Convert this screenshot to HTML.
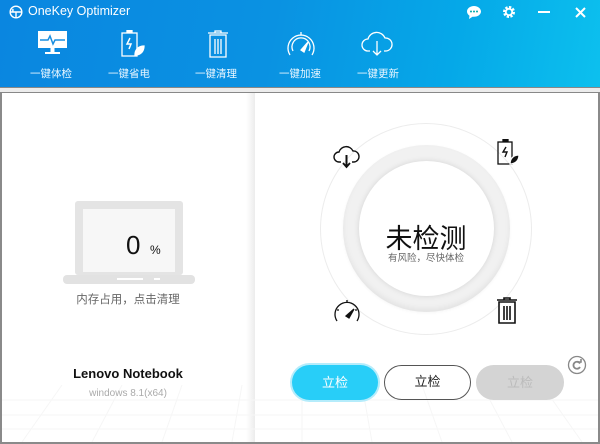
<!DOCTYPE html>
<html><head><meta charset="utf-8"><style>
*{margin:0;padding:0;box-sizing:border-box}
body{width:600px;height:444px;overflow:hidden;background:#fff;font-family:"Liberation Sans","Noto Sans CJK SC",sans-serif;position:relative}
.hdr{position:absolute;left:0;top:0;width:600px;height:88px;background:linear-gradient(100deg,#0a86e0 0%,#0a92e2 45%,#05a8e8 75%,#0cc0ee 100%)}
.t{position:absolute;color:#fff}
.lab{position:absolute;top:66px;color:#e8f6ff;font-size:10.5px;width:60px;text-align:center}
.strip{position:absolute;left:0;top:87px;width:600px;height:6px;background:#ececec;border-top:1px solid #888;border-bottom:1px solid #888}
.frame{position:absolute;left:0;top:93px;width:600px;height:351px;border-left:2px solid #8a8a8a;border-right:2px solid #8a8a8a;border-bottom:2px solid #8a8a8a}
.div{position:absolute;left:246px;top:93px;width:9px;height:349px;background:linear-gradient(90deg,#fff,#ececec)}
.btn{position:absolute;top:365px;height:35px;border-radius:18px;font-size:13px;text-align:center;line-height:35px}
</style></head><body>
<div class="hdr">
<svg style="position:absolute;left:9px;top:5px" width="14" height="14" viewBox="0 0 18 18" fill="none" stroke="#fff" stroke-width="1.8"><circle cx="9" cy="9" r="7.5"/><path d="M2 9h14M9 9v7M5 5v4"/></svg>
<div class="t" style="left:28px;top:4px;font-size:12.5px">OneKey Optimizer</div>
<svg style="position:absolute;left:466px;top:5px" width="16" height="15" viewBox="0 0 16 15"><path d="M8 1C4 1 1 3.5 1 6.5c0 1.8 1 3.2 2.5 4.2L3 14l3.5-2.3c.5.1 1 .1 1.5.1 4 0 7-2.5 7-5.3S12 1 8 1z" fill="#fff"/><circle cx="5" cy="6.5" r="1" fill="#0aa"/><circle cx="8" cy="6.5" r="1" fill="#0aa"/><circle cx="11" cy="6.5" r="1" fill="#0aa"/></svg>
<svg style="position:absolute;left:502px;top:5px" width="14" height="14" viewBox="0 0 14 14"><circle cx="7" cy="7" r="4.5" fill="none" stroke="#fff" stroke-width="3" stroke-dasharray="2.2 1.3"/><circle cx="7" cy="7" r="3.2" fill="none" stroke="#fff" stroke-width="1.8"/></svg>
<div style="position:absolute;left:538px;top:11px;width:12px;height:2px;background:#fff"></div>
<svg style="position:absolute;left:575px;top:7px" width="11" height="11" viewBox="0 0 11 11" stroke="#fff" stroke-width="2"><path d="M1 1l9 9M10 1l-9 9"/></svg>
<svg style="position:absolute;left:38px;top:31px" width="29" height="24" viewBox="0 0 29 24"><rect x="0" y="0" width="29" height="17" fill="#fff"/><path d="M2 9h8l2-4 3 8 2-4h10" fill="none" stroke="#1a8fe0" stroke-width="1.5"/><rect x="12.5" y="17" width="4" height="4" fill="#fff"/><rect x="7" y="21" width="15" height="2" fill="#fff"/></svg>
<svg style="position:absolute;left:119px;top:30px" width="28" height="28" viewBox="0 0 26 28" fill="none" stroke="#fff" stroke-width="1.3"><rect x="7" y="0.5" width="5" height="2" fill="#fff"/><rect x="2" y="3" width="15" height="23"/><path d="M10 8l-3 6h4l-2 5" stroke-width="1.5"/><path d="M15 25c0-6 4-9 9-9 0 6-4 9-9 9z" fill="#fff"/></svg>
<svg style="position:absolute;left:207px;top:30px" width="22" height="28" viewBox="0 0 22 28" fill="none" stroke="#fff" stroke-width="1.3"><path d="M1 3h20M8 3V1h6v2M3 5h16v22H3z"/><path d="M8 9v15M11 9v15M14 9v15"/></svg>
<svg style="position:absolute;left:285px;top:30px" width="32" height="28" viewBox="0 0 32 28" fill="none" stroke="#fff" stroke-width="1.3"><path d="M5 25A13 13 0 1 1 27 25"/><path d="M8 21A9 9 0 1 1 24 21"/><path d="M16 20l7-8-4 10z" fill="#fff"/><path d="M16 2v3"/></svg>
<svg style="position:absolute;left:361px;top:31px" width="32" height="26" viewBox="0 0 32 26" fill="none" stroke="#fff" stroke-width="1.3"><path d="M9 20H7a6 6 0 0 1 0-12 9 9 0 0 1 17-1 6.5 6.5 0 0 1 1 13h-2"/><path d="M16 10v14M12 20l4 4 4-4"/></svg>
<div class="lab" style="left:21px">一键体检</div>
<div class="lab" style="left:99px">一键省电</div>
<div class="lab" style="left:186px">一键清理</div>
<div class="lab" style="left:270px">一键加速</div>
<div class="lab" style="left:348px">一键更新</div>
</div>
<div class="strip"></div>
<div class="frame"></div>
<div class="div"></div>
<svg style="position:absolute;left:2px;top:385px" width="596" height="57"><g stroke="#f6f6f6" stroke-width="1" fill="none"><path d="M0 15L596 15M0 30L596 30M0 44L596 44"/><path d="M60 0L20 57M120 0L90 57M180 0L160 57M240 0L230 57M300 0L300 57M360 0L370 57M420 0L440 57M480 0L510 57M540 0L580 57"/></g></svg>
<svg style="position:absolute;left:63px;top:200px" width="132" height="84" viewBox="0 0 132 84"><rect x="12" y="1" width="108" height="74" rx="3" fill="#e4e4e4"/><rect x="20" y="9" width="92" height="63" fill="#f7f7f7"/><rect x="0" y="75" width="132" height="9" rx="4" fill="#e2e2e2"/><rect x="54" y="78" width="26" height="2" fill="#fff"/><rect x="91" y="78" width="6" height="2" fill="#fff"/></svg>
<div style="position:absolute;left:126px;top:230px;font-size:26px;color:#111">0</div>
<div style="position:absolute;left:150px;top:243px;font-size:12px;color:#111">%</div>
<div style="position:absolute;left:0;width:256px;top:291px;text-align:center;font-size:11.5px;color:#666">内存占用，点击清理</div>
<div style="position:absolute;left:0;width:256px;top:366px;text-align:center;font-size:13px;font-weight:bold;color:#111">Lenovo Notebook</div>
<div style="position:absolute;left:0;width:256px;top:388px;text-align:center;font-size:10px;color:#aaa">windows 8.1(x64)</div>
<div style="position:absolute;left:320px;top:123px;width:212px;height:212px;border-radius:50%;border:1px solid #ececec"></div>
<div style="position:absolute;left:343px;top:145px;width:167px;height:167px;border-radius:50%;background:#f1f1f1;box-shadow:inset 0 -3px 6px rgba(0,0,0,.06),0 1px 3px rgba(0,0,0,.04)"></div>
<div style="position:absolute;left:359px;top:161px;width:135px;height:135px;border-radius:50%;background:#fff;box-shadow:0 0 6px rgba(0,0,0,.12)"></div>
<div style="position:absolute;left:346px;top:217px;width:160px;text-align:center;font-size:27px;color:#111">未检测</div>
<div style="position:absolute;left:346px;top:250px;width:160px;text-align:center;font-size:9.5px;color:#666">有风险，尽快体检</div>
<svg style="position:absolute;left:332px;top:145px" width="29" height="24" viewBox="0 0 29 24" fill="none" stroke="#111" stroke-width="1.4"><path d="M9 17H7a5 5 0 0 1 0-10 7.5 7.5 0 0 1 14-1 5.5 5.5 0 0 1 1 11h-2"/><path d="M14.5 10v12" stroke-width="2"/><path d="M11 18l3.5 4 3.5-4" stroke-width="1.8"/></svg>
<svg style="position:absolute;left:496px;top:139px" width="26" height="27" viewBox="0 0 26 27" fill="none" stroke="#111" stroke-width="1.3"><rect x="7" y="0.5" width="5" height="2" fill="#111"/><rect x="2" y="3" width="14" height="22"/><path d="M10 8l-3 5h4l-2 5" stroke-width="1.4"/><path d="M14 25c0-6 4-9 9-9 0 6-4 9-9 9z" fill="#111" stroke="#fff"/></svg>
<svg style="position:absolute;left:332px;top:298px" width="30" height="26" viewBox="0 0 30 26" fill="none" stroke="#111" stroke-width="1.3"><path d="M5 23A12 12 0 1 1 25 23"/><path d="M15 2v3M5 12h2M23 12h2"/><path d="M14 18l8-7-5 9z" fill="#111"/></svg>
<svg style="position:absolute;left:496px;top:297px" width="22" height="28" viewBox="0 0 22 28" fill="none" stroke="#111" stroke-width="1.6"><path d="M1 3h20M8 3V1h6v2M3 5h16v21H3z"/><path d="M8 9v14M11 9v14M14 9v14"/></svg>
<div class="btn" style="left:292px;width:86px;background:#28cef8;color:#fff;box-shadow:0 0 0 2px #b5ecfb">立检</div>
<div class="btn" style="left:384px;width:87px;border:1.5px solid #555;color:#222;line-height:32px">立检</div>
<div class="btn" style="left:476px;width:88px;background:#d4d4d4;color:#bbb">立检</div>
<svg style="position:absolute;left:567px;top:355px" width="20" height="20" viewBox="0 0 20 20" fill="none" stroke="#888" stroke-width="1.3"><circle cx="10" cy="10" r="8.5"/><path d="M13 8.5A3.5 3.5 0 1 0 13 12" stroke-width="1.8"/><path d="M11 7h3V4" stroke-width="1.6"/></svg>
</body></html>
